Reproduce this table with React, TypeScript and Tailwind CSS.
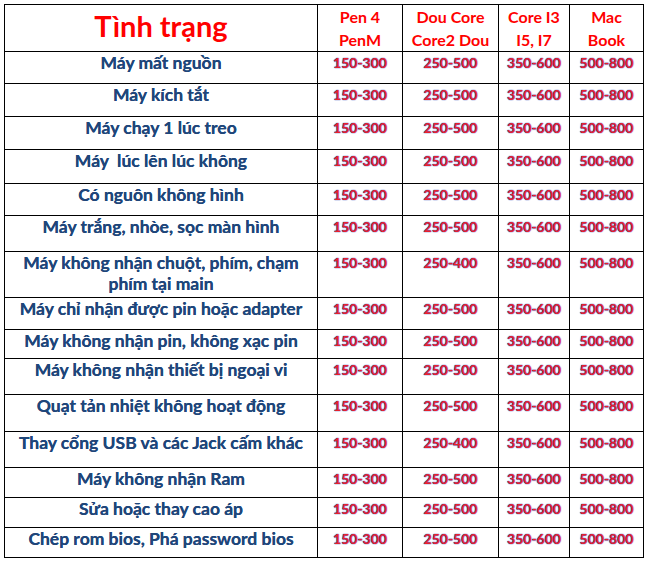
import React from "react";

const rows: { label: string[]; h: number; v: string[] }[] = [
  { label: ["Máy mất nguồn"], h: 32, v: ["150-300", "250-500", "350-600", "500-800"] },
  { label: ["Máy kích tắt"], h: 33, v: ["150-300", "250-500", "350-600", "500-800"] },
  { label: ["Máy chạy 1 lúc treo"], h: 33, v: ["150-300", "250-500", "350-600", "500-800"] },
  { label: ["Máy  lúc lên lúc không"], h: 34, v: ["150-300", "250-500", "350-600", "500-800"] },
  { label: ["Có nguôn không hình"], h: 32, v: ["150-300", "250-500", "350-600", "500-800"] },
  { label: ["Máy trắng, nhòe, sọc màn hình"], h: 36, v: ["150-300", "250-500", "350-600", "500-800"] },
  { label: ["Máy không nhận chuột, phím, chạm", "phím tại main"], h: 46, v: ["150-300", "250-400", "350-600", "500-800"] },
  { label: ["Máy chỉ nhận được pin hoặc adapter"], h: 32, v: ["150-300", "250-500", "350-600", "500-800"] },
  { label: ["Máy không nhận pin, không xạc pin"], h: 29, v: ["150-300", "250-500", "350-600", "500-800"] },
  { label: ["Máy không nhận thiết bị ngoại vi"], h: 36, v: ["150-300", "250-500", "350-600", "500-800"] },
  { label: ["Quạt tản nhiệt không hoạt động"], h: 37, v: ["150-300", "250-500", "350-600", "500-800"] },
  { label: ["Thay cổng USB và các Jack cấm khác"], h: 36, v: ["150-300", "250-400", "350-600", "500-800"] },
  { label: ["Máy không nhận Ram"], h: 30, v: ["150-300", "250-500", "350-600", "500-800"] },
  { label: ["Sửa hoặc thay cao áp"], h: 30, v: ["150-300", "250-500", "350-600", "500-800"] },
  { label: ["Chép rom bios, Phá password bios"], h: 30, v: ["150-300", "250-500", "350-600", "500-800"] },
];

const headers = [
  ["Pen 4", "PenM"],
  ["Dou Core", "Core2 Dou"],
  ["Core I3", "I5, I7"],
  ["Mac", "Book"],
];

const widths = ["w-[313px]", "w-[85px]", "w-[96px]", "w-[71px]", "w-[74px]"];

export default function App() {
  return (
    <div className="w-[647px] h-[561px] bg-white pt-[4px] pl-[4px] font-['Lato','Open_Sans',sans-serif]">
      <table className="border-collapse table-fixed w-[639px]">
        <colgroup>
          {widths.map((w, i) => (
            <col key={i} className={w} />
          ))}
        </colgroup>
        <thead>
          <tr className="h-[46px]">
            <th className="border-[1.5px] border-black align-top text-center text-[#ff0000] text-[29px] font-bold leading-[40px] pt-[1px]">
              Tình trạng
            </th>
            {headers.map((h, i) => (
              <th
                key={i}
                className="border-[1.5px] border-black align-top text-center text-[#ff0000] text-[16px] font-bold leading-[23px] p-0"
              >
                {h[0]}
                <br />
                {h[1]}
              </th>
            ))}
          </tr>
        </thead>
        <tbody>
          {rows.map((r, i) => (
            <tr key={i} style={{ height: r.h }}>
              <td className="border-[1.5px] border-black align-top text-center text-[#1f467a] text-[17.5px] font-bold leading-[21px] pt-0 px-0 [text-shadow:0_0_0.5px_#1f467a]">
                {r.label.map((l, j) => (
                  <div key={j} className="whitespace-pre">{l}</div>
                ))}
              </td>
              {r.v.map((v, j) => (
                <td
                  key={j}
                  className="border-[1.5px] border-black align-top text-center text-[#e8202c] text-[14px] font-bold leading-[20px] pt-[1px] p-0 [text-shadow:0_0_1px_#2846b4,0_0_1px_#2846b4]"
                >
                  {v}
                </td>
              ))}
            </tr>
          ))}
        </tbody>
      </table>
    </div>
  );
}
